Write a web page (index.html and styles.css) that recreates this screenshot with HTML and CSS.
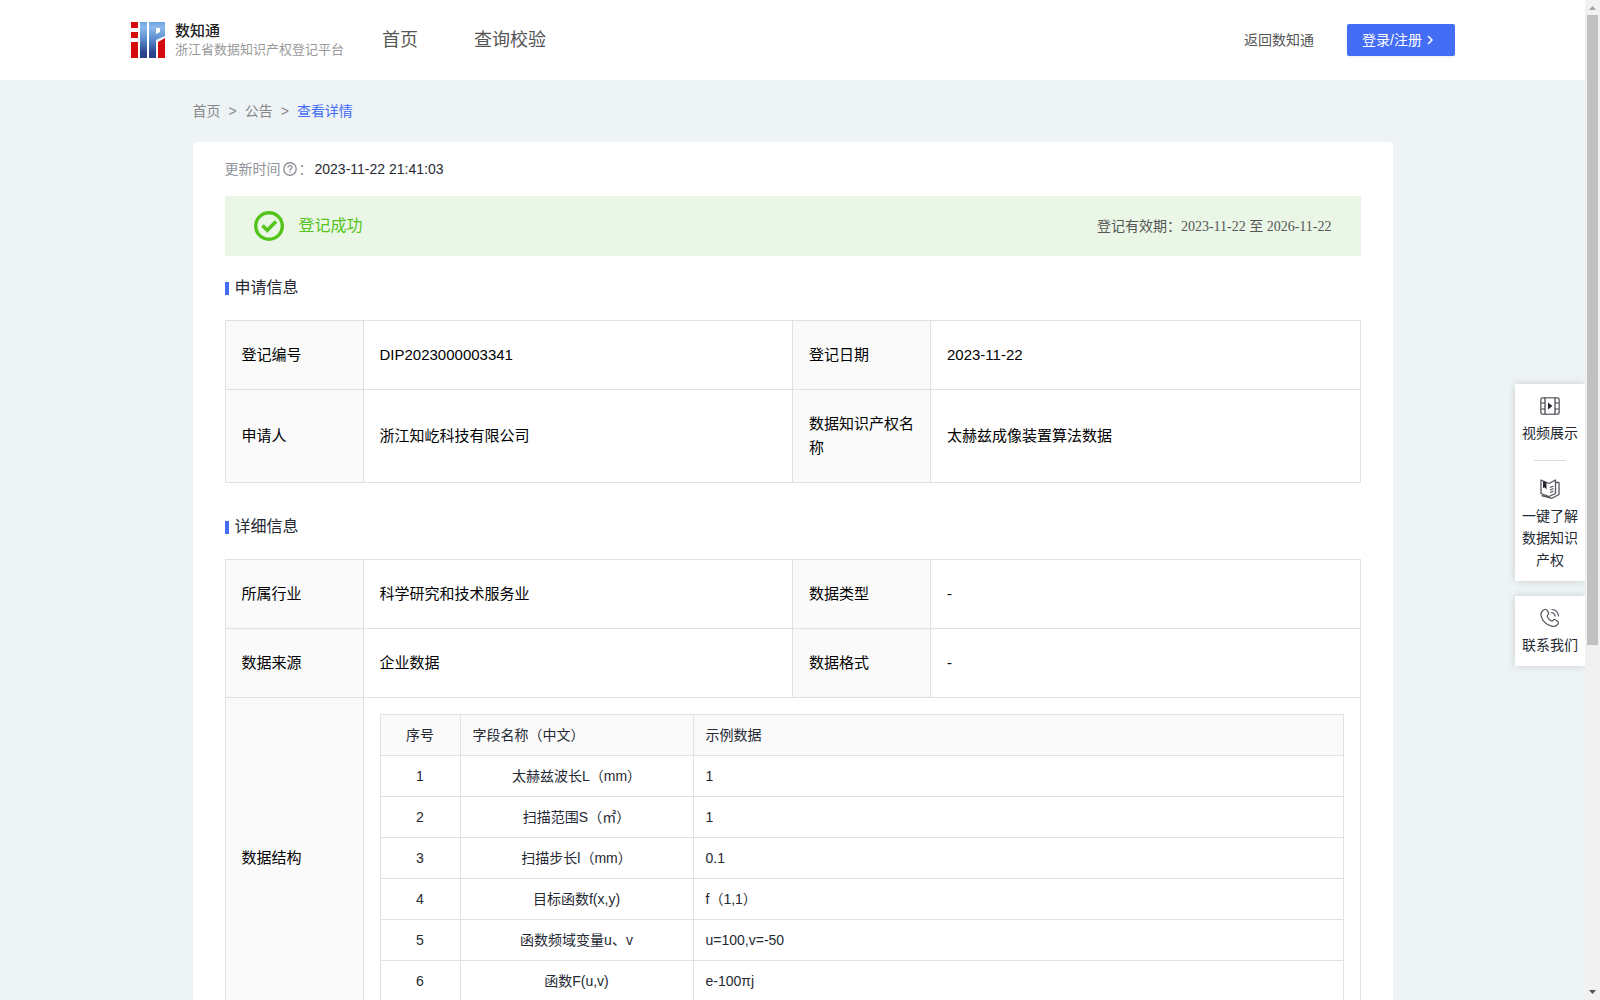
FILE: index.html
```html
<!DOCTYPE html>
<html lang="zh-CN">
<head>
  <meta charset="UTF-8">
  <title>数知通 - 查看详情</title>
  <link rel="stylesheet" href="styles.css">
</head>
<body>

  <div class="page">
    <header class="header">
      <a class="logo" href="#">
        <svg width="34" height="36" viewBox="0 0 34 36">
          <defs>
            <linearGradient id="blue" x1="0" y1="0" x2="0" y2="1">
              <stop offset="0" stop-color="#6ba3e0"/>
              <stop offset="0.15" stop-color="#8cb9ea"/>
              <stop offset="0.45" stop-color="#6090d0"/>
              <stop offset="0.85" stop-color="#2b4690"/>
              <stop offset="1" stop-color="#2a3f86"/>
            </linearGradient>
          </defs>
          <path fill="#d40a0e" d="M0 0h7v6H0zM0 10h7v6H0zM0 20h7v16H0zM27 20l7-4v20h-7z"/>
          <path fill="url(#blue)" fill-rule="evenodd" d="M9 0h7v36H9zM18 0h16v14l-9 4v18h-7zM25 6v6l4-2V6z"/>
        </svg>
        <span class="logo-text">
          <strong>数知通</strong>
          <small>浙江省数据知识产权登记平台</small>
        </span>
      </a>
      <nav class="nav">
        <a href="#">首页</a>
        <a href="#">查询校验</a>
      </nav>
      <a class="back" href="#">返回数知通</a>
      <button class="login" type="button">登录/注册
        <svg width="8" height="10" viewBox="0 0 8 10" fill="none" stroke="#fff" stroke-width="1.5"><path d="M2 1l4 4-4 4"/></svg>
      </button>
    </header>

    <main class="main">
      <div class="crumb">
        <a href="#">首页</a><i>&gt;</i><a href="#">公告</a><i>&gt;</i><a class="on" href="#">查看详情</a>
      </div>

      <div class="card">
        <div class="update">
          <span>更新时间</span>
          <svg width="14" height="14" viewBox="0 0 14 14" fill="none" stroke="#909399" stroke-width="1.4">
            <circle cx="7" cy="7" r="6.2"/>
            <path d="M5 5.6C5 3 9 3 9 5.5 9 7 7 6.8 7 8.4M7 9.5v1.2"/>
          </svg>
          <span>：</span>
          <b>2023-11-22 21:41:03</b>
        </div>

        <div class="banner">
          <svg width="30" height="30" viewBox="0 0 30 30" fill="none" stroke="#52c41a">
            <circle cx="15" cy="15" r="13.3" stroke-width="3.4"/>
            <path d="M8.5 14.5l4.8 4.7 8.7-8.7" stroke-width="3.6"/>
          </svg>
          <span class="status">登记成功</span>
          <span class="period">登记有效期：<span class="dates">2023-11-22 至 2026-11-22</span></span>
        </div>

        <h2 class="title">申请信息</h2>
        <table class="info">
          <colgroup><col class="c-label"><col><col class="c-label"><col></colgroup>
          <tr>
            <th>登记编号</th>
            <td>DIP2023000003341</td>
            <th>登记日期</th>
            <td>2023-11-22</td>
          </tr>
          <tr>
            <th>申请人</th>
            <td>浙江知屹科技有限公司</td>
            <th>数据知识产权名称</th>
            <td>太赫兹成像装置算法数据</td>
          </tr>
        </table>

        <h2 class="title">详细信息</h2>
        <table class="info">
          <colgroup><col class="c-label"><col><col class="c-label"><col></colgroup>
          <tr>
            <th>所属行业</th>
            <td>科学研究和技术服务业</td>
            <th>数据类型</th>
            <td>-</td>
          </tr>
          <tr>
            <th>数据来源</th>
            <td>企业数据</td>
            <th>数据格式</th>
            <td>-</td>
          </tr>
          <tr>
            <th>数据结构</th>
            <td class="wrap" colspan="3">
              <table class="fields">
                <colgroup><col class="c-no"><col class="c-name"><col></colgroup>
                <tr><th>序号</th><th>字段名称（中文）</th><th>示例数据</th></tr>
                <tr><td>1</td><td>太赫兹波长L（mm）</td><td>1</td></tr>
                <tr><td>2</td><td>扫描范围S（㎡）</td><td>1</td></tr>
                <tr><td>3</td><td>扫描步长l（mm）</td><td>0.1</td></tr>
                <tr><td>4</td><td>目标函数f(x,y)</td><td>f（1,1）</td></tr>
                <tr><td>5</td><td>函数频域变量u、v</td><td>u=100,v=-50</td></tr>
                <tr><td>6</td><td>函数F(u,v)</td><td>e-100πj</td></tr>
              </table>
            </td>
          </tr>
        </table>
      </div>
    </main>

    <aside class="side">
      <div class="side-box">
        <a href="#">
          <svg width="20" height="20" viewBox="0 0 20 20" fill="none" stroke="#77797f" stroke-width="1.6">
            <rect x="0.8" y="1.8" width="18.4" height="16.4" rx="2.5"/>
            <path d="M1 7h4M1 13h4M15 7h4M15 13h4"/>
            <path d="M5 1.8v16.4M15 1.8v16.4" stroke="#3c3f47" stroke-width="1.2"/>
            <path d="M8 6.5l4.5 3.5L8 13.5z" fill="#23262e" stroke="none"/>
          </svg>
          视频展示
        </a>
        <hr>
        <a href="#">
          <svg width="20" height="20" viewBox="0 0 20 20" fill="none" stroke="#55575e" stroke-width="1.3" stroke-linejoin="round">
            <path d="M1 1l8 3.5L15.5 1v13.5L9 17.5 1 14.5zM16 3.5h3v12L12 19.3 1.5 16.5"/>
            <path d="M10 8.500l3.500-1.500M10 11l3.500-1.500M10 13.500l3.500-1.500"/>
            <path d="M3 2l3.500 1.400v7L4.800 8.600 3 9z" fill="#23262e" stroke="none"/>
          </svg>
          一键了解数据知识产权
        </a>
      </div>
      <div class="side-box">
        <a href="#">
          <svg width="20" height="20" viewBox="0 0 20 20" fill="none" stroke="#55575e" stroke-width="1.2" stroke-linecap="round" stroke-linejoin="round">
            <path d="M4 1.800c1.200-1 2.200-.6 3 .6l1.300 2c.6 1 .3 1.800-.5 2.500-.8.700-.8 1.300-.2 2.300.8 1.400 1.800 2.500 3.200 3.400.9.600 1.600.5 2.200-.3.800-.9 1.700-1.100 2.600-.4l1.900 1.300c1.100.8 1.300 1.800.4 2.900-1.500 2-3.600 2.900-6.400 2C6 16.500 2.300 12.500 1 7.600.5 5 1.700 3 4 1.800z"/>
            <path d="M11.500 4.500c2 .3 3.300 1.500 3.700 3.700M12 1.500c3.800.3 6 2.400 6.500 6.300"/>
          </svg>
          联系我们
        </a>
      </div>
    </aside>
  </div>

  <div class="scrollbar">
    <svg width="15" height="15" viewBox="0 0 15 15"><path fill="#a3a3a3" d="M4 10l3.500-4L11 10z"/></svg>
    <div class="thumb"></div>
    <svg width="15" height="15" viewBox="0 0 15 15"><path fill="#505050" d="M4 5l3.500 4L11 5z"/></svg>
  </div>

</body>
</html>
```
FILE: styles.css
```css
* { box-sizing: border-box; }
body { margin: 0; display: flex; height: 100vh; overflow: hidden; background: #eef3f6; color: #252933; font: 14px/22px "Liberation Sans", "Noto Sans CJK SC", sans-serif; }
a { color: inherit; text-decoration: none; }
svg { display: block; flex: none; }

.page { flex: 1; min-width: 0; height: 100%; overflow: hidden; position: relative; }

/* 顶部 */
.header { display: flex; align-items: center; height: 80px; padding: 0 130px 0 131px; background: #fff; }
.logo { display: flex; gap: 10px; align-items: center; }
.logo-text strong { display: block; font-size: 15px; line-height: 20px; font-weight: 500; color: #222; }
.logo-text small { display: block; font-size: 13px; line-height: 18px; color: #999; }
.nav { display: flex; gap: 56px; margin-left: 38px; font-size: 18px; line-height: 24px; color: #555; }
.back { margin-left: auto; color: #555; }
.login { display: flex; align-items: center; gap: 4px; width: 108px; height: 32px; margin-left: 33px; padding: 0 15px; border: 0; border-radius: 2px; background: #446df6; color: #fff; font: inherit; box-shadow: 0 2px 2px rgba(0,0,0,0.05); cursor: pointer; }

.main { width: 1200px; max-width: 100%; margin: 0 auto; }
.crumb { display: flex; gap: 8px; padding: 20px 0; color: #888; }
.crumb i { font-style: normal; }
.crumb .on { color: #446df6; }

.card { padding: 16px 32px; background: #fff; border-radius: 4px; }
.update { display: flex; align-items: center; color: #909399; }
.update svg { margin: 0 2px; }
.update b { margin-left: 2px; font-weight: normal; color: #252933; }

.banner { display: flex; align-items: center; height: 60px; margin-top: 16px; padding: 0 29px; background: #ebf7e6; }
.status { margin-left: 15px; font-size: 16px; color: #52c41a; }
.period { margin-left: auto; color: #555; }
.dates { font-family: "Liberation Serif", "Noto Sans CJK SC", serif; }

.title { display: flex; align-items: center; gap: 6px; margin: 20px 0; font-size: 16px; line-height: 24px; font-weight: normal; }
.title::before { content: ""; width: 4px; height: 13px; background: #446df6; }

/* 信息表格 */
table { width: 100%; border-collapse: collapse; table-layout: fixed; }
th, td { border: 1px solid #e1e1e1; text-align: left; font-weight: normal; }
th { background: #fafafa; }
.info { margin-bottom: 32px; font-size: 15px; line-height: 24px; color: #000; }
.info th, .info td { padding: 22px 16px; }
.info th { padding-right: 15px; }
.c-label { width: 138px; }
.info .wrap { padding: 16px; }
.fields { font-size: 14px; line-height: 22px; color: #252933; }
.info .fields th, .info .fields td { padding: 9px 12px; }
.c-no { width: 80px; }
.c-name { width: 233px; }
.fields th:first-child, .fields td:first-child, .fields td:nth-child(2) { text-align: center; }

/* 右侧悬浮 */
.side { position: absolute; right: 0; top: 384px; width: 70px; }
.side-box { margin-bottom: 15px; padding: 12px 7px 10px; background: #fff; box-shadow: 0 0 8px rgba(0,0,0,0.16); text-align: center; }
.side-box a { display: block; }
.side-box svg { margin: 0 auto 6px; }
.side-box hr { width: 32px; margin: 16px auto 18px; border: 0; border-top: 1px solid #ddd; }

.scrollbar { display: flex; flex-direction: column; width: 15px; background: #f1f1f1; }
.thumb { height: 63%; width: 11px; margin: 0 2px auto; background: #c1c1c1; }
```
